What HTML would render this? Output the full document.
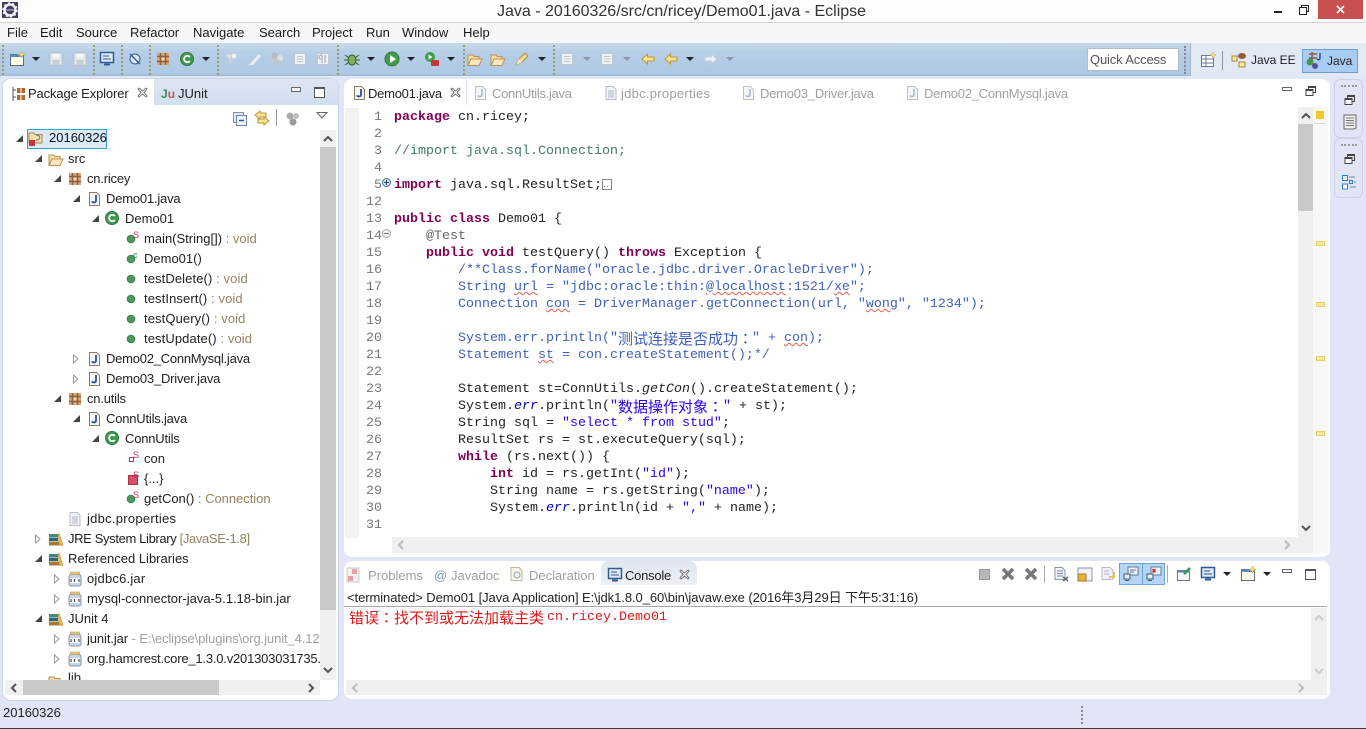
<!DOCTYPE html>
<html lang="en"><head><meta charset="utf-8"><title>Java - 20160326/src/cn/ricey/Demo01.java - Eclipse</title>
<style>
html,body{margin:0;padding:0}
body{width:1366px;height:729px;overflow:hidden;position:relative;background:#e1e5f6;font-family:"Liberation Sans","Noto Sans CJK SC",sans-serif;font-size:13px;color:#222}
div,span.p,svg.i,svg.co{position:absolute}
.t{white-space:nowrap;line-height:20px;height:20px}
.r{margin-top:1px}
.i{width:16px;height:16px;overflow:visible}
.m{top:23px;line-height:20px;font-size:13px;color:#1a1a1a}
.d{color:#95825f}
.g{color:#a0a0a0}
.a{width:0;height:0;border-left:4px solid transparent;border-right:4px solid transparent;border-top:4px solid #222;top:57px}
.al{border-top-color:#8a97a8}
.sep{width:1px;height:30px;top:45px;border-left:2px dotted #9a9a78}
.ex{width:0;height:0;border-style:solid;border-width:0 0 7px 7px;border-color:transparent transparent #444 transparent}
.co{width:6px;height:10px}
.ln{left:352px;width:30px;text-align:right;font:13.33px/17px "Liberation Mono",monospace;color:#787878;height:17px;margin-top:1px}
.c{left:394px;font:13.33px/17px "Liberation Mono","Noto Sans CJK SC",monospace;white-space:pre;color:#222;height:17px;margin-top:1px}
.c b{color:#7f0055;font-weight:bold}
.c .s{color:#2a00ff}
.c .f{color:#0000c0}
.c .cm{color:#3f7f5f}
.c .an{color:#646464}
.z{font:15px/17px "Noto Sans CJK SC",sans-serif;white-space:pre;height:17px;margin-top:1px}
.z span{font-family:"Noto Sans CJK TC",sans-serif}
.c u{text-decoration:underline wavy #e86050 1px;text-underline-offset:1px}
.mark{left:1316px;width:7px;height:3px;background:#fbe99b;border:1px solid #e8cf70}
</style></head>
<body>
<svg width="0" height="0" style="position:absolute">
<defs>
<symbol id="jf" viewBox="0 0 16 16"><path d="M3.500 1.500h7l3 3v10h-10z" fill="#f4f7fc" stroke="#8a7a58"/><path d="M10 4v5.500c0 2.500-3.500 2.500-4 .8" fill="none" stroke="#2c4f9c" stroke-width="1.800"/></symbol>
<symbol id="jg" viewBox="0 0 16 16"><path d="M3.500 1.500h7l3 3v10h-10z" fill="#f4f6fa" stroke="#c4c4ae"/><path d="M10 4v5.500c0 2.500-3.500 2.500-4 .8" fill="none" stroke="#a8b6d4" stroke-width="1.500"/></symbol>
<symbol id="pf" viewBox="0 0 16 16"><path d="M3 1.500h7l3 3v10H3z" fill="#f2f4f8" stroke="#b8bcc8"/><path d="M5 6h6M5 8h6M5 10h6M5 12h6" stroke="#b0b8c8"/></symbol>
<symbol id="pk" viewBox="0 0 16 16"><rect x="2" y="2" width="12" height="12" fill="#d8a878"/><path d="M2 5.500h12M2 10.500h12M5.500 2v12M10.500 2v12" stroke="#8f5d3c" stroke-width="1.500"/><rect x="6.500" y="6.500" width="3" height="3" fill="#f0d8b8"/></symbol>
<symbol id="cl" viewBox="0 0 16 16"><circle cx="8" cy="8" r="6.500" fill="#3f9a4e" stroke="#2f7a3c"/><path d="M10.800 6a3.200 3.200 0 1 0 0 4" fill="none" stroke="#fff" stroke-width="1.800"/></symbol>
<symbol id="mt" viewBox="0 0 16 16"><circle cx="8" cy="8" r="3.800" fill="#4e9a5e" stroke="#3a7f48"/></symbol>
<symbol id="jr" viewBox="0 0 16 16"><rect x="2" y="3.500" width="12" height="11.500" rx="2" fill="#c8d4e8" stroke="#8a96ac"/><rect x="3.500" y="1" width="9" height="2.500" fill="#e8c880" stroke="#b89858" stroke-width=".6"/><rect x="3" y="7" width="10" height="5" fill="#fff"/><path d="M4 8v3M7.500 8v3M12 8v3" stroke="#445" stroke-width="1.200"/></symbol>
<symbol id="lb" viewBox="0 0 16 16"><rect x="1" y="3" width="9" height="3" fill="#3e8a80"/><rect x="1" y="6.500" width="9" height="3.500" fill="#2c6a70"/><rect x="1" y="10.500" width="10" height="4" fill="#a87838"/><path d="M10 3l1-1 4 12.500h-3.500z" fill="#e8b850" stroke="#b88830" stroke-width=".5"/></symbol>
<symbol id="fo" viewBox="0 0 16 16"><path d="M1 4h5l1 1.500h5V8H4l-3 6.500z" fill="#f8dca0" stroke="#b8925a"/><path d="M1 14.500 4 8h11l-3 6.500z" fill="#fbe9bd" stroke="#b8925a"/></symbol>
<symbol id="win" viewBox="0 0 16 16"><rect x="1.500" y="3.500" width="13" height="11" fill="#fdfce8" stroke="#5a6a80"/><rect x="1.500" y="3.500" width="13" height="2.500" fill="#5c8ac0"/><path d="M12.500 0l1 2.500 2.500 1-2.500 1-1 2.500-1-2.500-2.500-1 2.500-1z" fill="#fbe27a" stroke="#c8a030" stroke-width=".5"/></symbol>
<symbol id="mon" viewBox="0 0 16 16"><rect x="1.500" y="1.500" width="13" height="10" fill="#dfe8f4" stroke="#2f5c94" stroke-width="1.500"/><path d="M4 5h6M4 8h8" stroke="#2f5c94"/><rect x="5" y="12.500" width="6" height="2" fill="#2f5c94"/></symbol>
<symbol id="run" viewBox="0 0 16 16"><circle cx="8" cy="8" r="7" fill="#3f9f48" stroke="#2f7a3c"/><path d="M6 4l6 4-6 4z" fill="#fff"/></symbol>
<symbol id="xg" viewBox="0 0 16 16"><path d="M3 3l10 10M13 3L3 13" stroke="#777" stroke-width="3.500"/></symbol>
<symbol id="back" viewBox="0 0 16 16"><path d="M7.500 3 2 8l5.500 5v-3H14V6H7.500z" fill="#fcdf8a" stroke="#c09838"/></symbol>
<symbol id="fwd" viewBox="0 0 16 16"><path d="M8.500 3 14 8l-5.500 5v-3H2V6h6.500z" fill="#eef0f4" stroke="#c8ccd4"/></symbol>
<symbol id="gd" viewBox="0 0 16 16"><rect x="2.500" y="2.500" width="11" height="11" fill="#eef1f5" stroke="#c2c7cf"/><path d="M5 5.500h6M5 8h6M5 10.500h6" stroke="#c0c5cd"/></symbol>
<symbol id="sv" viewBox="0 0 16 16"><rect x="2" y="2" width="12" height="12" fill="#e4e8ec" stroke="#bcc2ca"/><rect x="5" y="2.500" width="6" height="4" fill="#f6f8fa"/><rect x="5" y="9" width="6" height="5" fill="#c8ced6"/></symbol>
<symbol id="rs" viewBox="0 0 12 12"><rect x="3.500" y=".5" width="7" height="6" fill="none" stroke="#444"/><rect x="1" y="3.500" width="7" height="6" fill="#fff" stroke="#444"/><path d="M1 4.500h7M3.500 1.500h7" stroke="#444"/></symbol>
<symbol id="cx" viewBox="0 0 6 10"><path d="M.5 1l4.500 4-4.500 4z" fill="#fff" stroke="#9a9a9a"/></symbol>
</defs>
</svg>

<!-- title bar -->
<div style="left:0;top:0;width:1366px;height:22px;background:#fdfdfd;border-bottom:1px solid #d4d4d4"></div>
<svg class="i" style="left:2px;top:2px" viewBox="0 0 16 16"><rect width="16" height="16" fill="#3e3e62"/><circle cx="8" cy="8" r="5.500" fill="#3e3e62" stroke="#f0f0f6" stroke-width="2.500"/><circle cx="8" cy="8" r="7" fill="none" stroke="#f0f0f6" stroke-width="1.500" stroke-dasharray="2 2.400"/><rect x="4" y="7.500" width="8" height="1" fill="#ccd"/></svg>
<div class="t" style="left:497px;top:2px;font-size:16px;color:#333">Java - 20160326/src/cn/ricey/Demo01.java - Eclipse</div>
<div style="left:1274px;top:11px;width:8px;height:2px;background:#222"></div>
<svg style="left:1299px;top:5px;position:absolute" width="10" height="10" viewBox="0 0 10 10"><rect x="2.500" y=".5" width="7" height="6" fill="none" stroke="#222"/><rect x=".5" y="2.500" width="7" height="7" fill="#fff" stroke="#222"/></svg>
<div style="left:1318px;top:0;width:45px;height:19px;background:#c75050"></div>
<svg style="left:1336px;top:5px;position:absolute" width="9" height="9" viewBox="0 0 9 9"><path d="M1 1l7 7M8 1 1 8" stroke="#fff" stroke-width="1.600"/></svg>

<!-- menu -->
<div style="left:0;top:23px;width:1366px;height:20px;background:#f5f7f8"></div>
<div class="m" style="left:7px">File</div><div class="m" style="left:40px">Edit</div><div class="m" style="left:76px">Source</div><div class="m" style="left:130px">Refactor</div><div class="m" style="left:193px">Navigate</div><div class="m" style="left:259px">Search</div><div class="m" style="left:312px">Project</div><div class="m" style="left:366px">Run</div><div class="m" style="left:402px">Window</div><div class="m" style="left:463px">Help</div>

<!-- toolbar -->
<div style="left:0;top:43px;width:1190px;height:33px;background:linear-gradient(#c8dbec,#b6cee6 30%,#aec9e3 92%,#9db8d6)"></div>
<div style="left:0;top:76px;width:1366px;height:3px;background:#e1e8f5"></div>
<div class="sep" style="left:2px"></div><div class="sep" style="left:93px"></div><div class="sep" style="left:121px"></div><div class="sep" style="left:149px"></div><div class="sep" style="left:217px"></div><div class="sep" style="left:337px"></div><div class="sep" style="left:463px"></div><div class="sep" style="left:553px"></div>
<svg class="i" style="left:9px;top:51px"><use href="#win"/></svg><div class="a" style="left:32px"></div>
<svg class="i" style="left:48px;top:51px"><use href="#sv"/></svg>
<svg class="i" style="left:72px;top:51px"><use href="#sv"/></svg>
<svg class="i" style="left:99px;top:51px"><use href="#mon"/></svg>
<svg class="i" style="left:127px;top:51px" viewBox="0 0 16 16"><ellipse cx="8" cy="8" rx="5" ry="5" fill="#dfe8f4" stroke="#2f5c94"/><path d="M3 3l10 10" stroke="#2f5c94" stroke-width="1.300"/></svg>
<svg class="i" style="left:155px;top:51px"><use href="#pk"/></svg>
<svg class="i" style="left:179px;top:51px"><use href="#cl"/></svg><div class="a" style="left:202px"></div>
<svg class="i" style="left:223px;top:51px" viewBox="0 0 16 16"><path d="M2 3h9l-3 5v6l-2-2V8z" fill="#dde2e8" stroke="#c2c7cf"/><circle cx="11" cy="5" r="3" fill="#eef1f5" stroke="#c2c7cf"/></svg>
<svg class="i" style="left:247px;top:51px" viewBox="0 0 16 16"><path d="M2 14 12 3l2 2-8 9z" fill="#e8edf2"/></svg>
<svg class="i" style="left:269px;top:51px" viewBox="0 0 16 16"><circle cx="6" cy="5" r="3.500" fill="#b8bcc2"/><circle cx="11" cy="7" r="3" fill="#dde0e5"/><circle cx="7" cy="11" r="3.500" fill="#c2c6cc"/></svg>
<svg class="i" style="left:292px;top:51px"><use href="#gd"/></svg>
<svg class="i" style="left:315px;top:51px" viewBox="0 0 16 16"><rect x="2.500" y="2.500" width="11" height="11" fill="#eef1f5" stroke="#c2c7cf"/><path d="M7 4v8M10 4v8M7 4H6a2 2 0 0 0 0 4h1" fill="none" stroke="#b0b5bd" stroke-width="1.300"/></svg>
<svg class="i" style="left:344px;top:51px" viewBox="0 0 16 16"><ellipse cx="8" cy="9" rx="4" ry="5" fill="#7fb060" stroke="#405a30"/><path d="M1 4l4 3M15 4l-4 3M0 9h4M16 9h-4M1 14l4-3M15 14l-4-3" stroke="#405a30"/></svg><div class="a" style="left:367px"></div>
<svg class="i" style="left:384px;top:51px"><use href="#run"/></svg><div class="a" style="left:407px"></div>
<svg class="i" style="left:424px;top:51px" viewBox="0 0 16 16"><circle cx="6" cy="6" r="5" fill="#3f9f48"/><path d="M4.500 3.500l4 2.500-4 2.500z" fill="#fff"/><rect x="7" y="9" width="8" height="6" rx="1" fill="#c83838"/></svg><div class="a" style="left:447px"></div>
<svg class="i" style="left:467px;top:51px"><use href="#fo"/></svg>
<svg class="i" style="left:490px;top:51px"><use href="#fo"/></svg>
<svg class="i" style="left:514px;top:51px" viewBox="0 0 16 16"><path d="M2 14 5 8l6-6 3 3-6 6z" fill="#f0d890" stroke="#b09040"/><path d="M2 14l3-6 3 3z" fill="#eee"/></svg><div class="a" style="left:538px"></div>
<svg class="i" style="left:559px;top:51px"><use href="#gd"/></svg><div class="a al" style="left:583px"></div>
<svg class="i" style="left:599px;top:51px"><use href="#gd"/></svg><div class="a al" style="left:623px"></div>
<svg class="i" style="left:640px;top:51px"><use href="#back"/></svg>
<svg class="i" style="left:663px;top:51px"><use href="#back"/></svg><div class="a" style="left:686px"></div>
<svg class="i" style="left:703px;top:51px"><use href="#fwd"/></svg><div class="a al" style="left:726px"></div>

<!-- quick access / perspectives -->
<div class="t" style="left:1087px;top:48px;width:88px;height:21px;background:#fff;border:1px solid #b4bcc8;padding-left:2px;line-height:21px;color:#555;letter-spacing:-.15px">Quick Access</div>
<div style="left:1184px;top:46px;width:2px;height:28px;border-left:2px dotted #888"></div>
<div style="left:1190px;top:43px;width:176px;height:33px;background:#e3e8f5;border-left:1px solid #a8b4c8"></div>
<svg class="i" style="left:1200px;top:52px" viewBox="0 0 16 16"><rect x="1.500" y="3.500" width="12" height="11" fill="#fff" stroke="#6a7a90"/><path d="M1.500 7h12M1.500 11h12M6 3.500v11" stroke="#6a7a90"/><path d="M13 0l1 2 2 1-2 1-1 2-1-2-2-1 2-1z" fill="#fbe27a" stroke="#c8a030" stroke-width=".5"/></svg>
<div style="left:1222px;top:51px;width:1px;height:19px;background:#8a94a4"></div>
<svg class="i" style="left:1231px;top:52px" viewBox="0 0 16 16"><rect x="1" y="4" width="5" height="5" fill="#fbe9a0" stroke="#a88a30"/><rect x="8" y="10" width="6" height="5" fill="#fbe9a0" stroke="#a88a30"/><ellipse cx="11" cy="4" rx="4" ry="3" fill="#8f5d3c"/></svg>
<div class="t" style="left:1251px;top:50px;color:#222;font-size:12px">Java EE</div>
<div style="left:1302px;top:49px;width:54px;height:22px;background:#a9cdf2;border:1px solid #6a9fd0"></div>
<svg class="i" style="left:1306px;top:52px" viewBox="0 0 16 16"><path d="M3 2h8M3 6h8M6 0v9" stroke="#8f5d3c" stroke-width="1.500"/><circle cx="4" cy="10" r="3.500" fill="#3f9a4e"/><circle cx="9" cy="14" r="3" fill="#5a4a9a"/><path d="M14 1v5c0 2-2 2-3 1" fill="none" stroke="#2c4f9c" stroke-width="1.500"/></svg>
<div class="t" style="left:1327px;top:51px;color:#222;font-size:12px">Java</div>

<!-- left panel -->
<div style="left:3px;top:79px;width:335px;height:621px;background:#fff;border-radius:8px;box-shadow:0 0 0 1px #cfd6e6"></div>
<div style="left:154px;top:79px;width:184px;height:26px;background:linear-gradient(#dde5f3,#d2dfef);border-radius:0 8px 0 0"></div>
<div style="left:3px;top:79px;width:151px;height:26px;background:#fff;border-radius:8px 8px 0 0"></div>
<svg class="i" style="left:11px;top:86px" viewBox="0 0 16 16"><path d="M2 1v14M2 4h3M2 11h3" stroke="#555"/><rect x="6" y="2" width="8" height="5" fill="#b06a30"/><rect x="6" y="9" width="8" height="5" fill="#b06a30"/><path d="M10 2v12" stroke="#fff"/></svg>
<div class="t" style="left:28px;top:84px;color:#222;letter-spacing:-.13px">Package Explorer</div>
<svg style="left:137px;top:87px;position:absolute" width="11" height="11" viewBox="0 0 11 11"><path d="M2 1l3.500 3L9 1l1 1-3 3.500 3 3.500-1 1-3.500-3L2 10 1 9l3-3.500L1 2z" fill="#fff" stroke="#777"/></svg>
<div class="t" style="left:161px;top:84px;font-weight:bold;font-size:12px"><span style="color:#3b8a4e">J</span><span style="color:#c85060">u</span></div>
<div class="t" style="left:178px;top:84px;color:#222">JUnit</div>
<div style="left:291px;top:87px;width:8px;height:3px;border:1px solid #666;background:#fff"></div>
<div style="left:314px;top:87px;width:9px;height:8px;border:1px solid #555;border-top-width:2px;background:#fff"></div>
<svg class="i" style="left:232px;top:111px" viewBox="0 0 16 16"><rect x="1.500" y="1.500" width="10" height="10" fill="#dfe8f4" stroke="#7a92ac"/><rect x="4.500" y="4.500" width="10" height="10" fill="#eef3f9" stroke="#6a84a4"/><path d="M7 9.500h5" stroke="#2f5c94" stroke-width="1.500"/></svg>
<svg class="i" style="left:254px;top:110px" viewBox="0 0 16 16"><path d="M6 1 1 5l5 4V7h6V3H6zM10 7l5 4-5 4v-2H4V9h6z" fill="#fce39a" stroke="#b8962f"/></svg>
<div style="left:276px;top:109px;width:1px;height:17px;background:#999"></div>
<svg class="i" style="left:285px;top:111px" viewBox="0 0 16 16"><circle cx="5" cy="5" r="3.500" fill="#aaa"/><circle cx="11" cy="5" r="3" fill="#c0c0c0"/><circle cx="8" cy="11" r="3.500" fill="#999"/></svg>
<svg style="left:316px;top:112px;position:absolute" width="12" height="7" viewBox="0 0 12 7"><path d="M1 .5h10L6 6z" fill="#fff" stroke="#666"/></svg>

<!-- tree -->
<div style="left:27px;top:129px;width:78px;height:18px;background:#d9ebf9;border:1px solid #3fa2c9"></div>
<div class="ex" style="left:16px;top:135px"></div>
<svg class="i" style="left:28px;top:130px" viewBox="0 0 16 16"><path d="M1 3h5l1 1.500h7V13H1z" fill="#f6dfa8" stroke="#a88a50"/><path d="M8 5c5 0 5 5 0 5" fill="none" stroke="#4a6fa8"/><rect x="1" y="10" width="6" height="6" fill="#c83838"/></svg>
<div class="t r" style="left:49px;top:127px;color:#111">20160326</div>
<div class="ex" style="left:35px;top:155px"></div>
<svg class="i" style="left:48px;top:151px"><use href="#fo"/></svg>
<div class="t r" style="left:68px;top:148px">src</div>
<div class="ex" style="left:54px;top:175px"></div>
<svg class="i" style="left:67px;top:171px"><use href="#pk"/></svg>
<div class="t r" style="left:87px;top:168px;letter-spacing:-.2px">cn.ricey</div>
<div class="ex" style="left:73px;top:195px"></div>
<svg class="i" style="left:86px;top:191px"><use href="#jf"/></svg>
<div class="t r" style="left:106px;top:188px;letter-spacing:-.2px">Demo01.java</div>
<div class="ex" style="left:92px;top:215px"></div>
<svg class="i" style="left:104px;top:210px"><use href="#cl"/></svg>
<div class="t r" style="left:125px;top:208px">Demo01</div>
<svg class="i" style="left:123px;top:231px"><use href="#mt"/></svg><div class="t" style="left:133px;top:225px;font-size:9px;color:#c0285a">S</div>
<div class="t r" style="left:144px;top:228px">main(String[]) <span class="d">: void</span></div>
<svg class="i" style="left:123px;top:251px"><use href="#mt"/></svg><div class="t" style="left:133px;top:245px;font-size:9px;color:#2f7a3c">c</div>
<div class="t r" style="left:144px;top:248px">Demo01()</div>
<svg class="i" style="left:123px;top:271px"><use href="#mt"/></svg>
<div class="t r" style="left:144px;top:268px;letter-spacing:.1px">testDelete() <span class="d">: void</span></div>
<svg class="i" style="left:123px;top:291px"><use href="#mt"/></svg>
<div class="t r" style="left:144px;top:288px;letter-spacing:.1px">testInsert() <span class="d">: void</span></div>
<svg class="i" style="left:123px;top:311px"><use href="#mt"/></svg>
<div class="t r" style="left:144px;top:308px;letter-spacing:.1px">testQuery() <span class="d">: void</span></div>
<svg class="i" style="left:123px;top:331px"><use href="#mt"/></svg>
<div class="t r" style="left:144px;top:328px;letter-spacing:.1px">testUpdate() <span class="d">: void</span></div>
<svg class="co" style="left:73px;top:354px"><use href="#cx"/></svg>
<svg class="i" style="left:86px;top:351px"><use href="#jf"/></svg>
<div class="t r" style="left:106px;top:348px;letter-spacing:-.24px">Demo02_ConnMysql.java</div>
<svg class="co" style="left:73px;top:374px"><use href="#cx"/></svg>
<svg class="i" style="left:86px;top:371px"><use href="#jf"/></svg>
<div class="t r" style="left:106px;top:368px;letter-spacing:-.2px">Demo03_Driver.java</div>
<div class="ex" style="left:54px;top:395px"></div>
<svg class="i" style="left:67px;top:391px"><use href="#pk"/></svg>
<div class="t r" style="left:87px;top:388px;letter-spacing:-.2px">cn.utils</div>
<div class="ex" style="left:73px;top:415px"></div>
<svg class="i" style="left:86px;top:411px"><use href="#jf"/></svg>
<div class="t r" style="left:106px;top:408px;letter-spacing:-.2px">ConnUtils.java</div>
<div class="ex" style="left:92px;top:435px"></div>
<svg class="i" style="left:104px;top:430px"><use href="#cl"/></svg>
<div class="t r" style="left:125px;top:428px;letter-spacing:-.2px">ConnUtils</div>
<div style="left:129px;top:457px;width:3px;height:3px;border:1px solid #c83050"></div><div class="t" style="left:133px;top:445px;font-size:9px;color:#c0285a">S</div>
<div class="t r" style="left:144px;top:448px">con</div>
<div style="left:128px;top:475px;width:8px;height:8px;background:#d85068;border:1px solid #a83048"></div><div class="t" style="left:133px;top:465px;font-size:9px;color:#c0285a">S</div>
<div class="t r" style="left:144px;top:468px">{...}</div>
<svg class="i" style="left:123px;top:491px"><use href="#mt"/></svg><div class="t" style="left:133px;top:485px;font-size:9px;color:#c0285a">S</div>
<div class="t r" style="left:144px;top:488px;letter-spacing:-.03px">getCon() <span class="d">: Connection</span></div>
<svg class="i" style="left:67px;top:511px"><use href="#pf"/></svg>
<div class="t r" style="left:87px;top:508px;letter-spacing:.27px">jdbc.properties</div>
<svg class="co" style="left:35px;top:534px"><use href="#cx"/></svg>
<svg class="i" style="left:48px;top:531px"><use href="#lb"/></svg>
<div class="t r" style="left:68px;top:528px;letter-spacing:-.36px">JRE System Library <span class="d">[JavaSE-1.8]</span></div>
<div class="ex" style="left:35px;top:555px"></div>
<svg class="i" style="left:48px;top:551px"><use href="#lb"/></svg>
<div class="t r" style="left:68px;top:548px">Referenced Libraries</div>
<svg class="co" style="left:54px;top:574px"><use href="#cx"/></svg>
<svg class="i" style="left:67px;top:571px"><use href="#jr"/></svg>
<div class="t r" style="left:87px;top:568px;letter-spacing:.2px">ojdbc6.jar</div>
<svg class="co" style="left:54px;top:594px"><use href="#cx"/></svg>
<svg class="i" style="left:67px;top:591px"><use href="#jr"/></svg>
<div class="t r" style="left:87px;top:588px">mysql-connector-java-5.1.18-bin.jar</div>
<div class="ex" style="left:35px;top:615px"></div>
<svg class="i" style="left:48px;top:611px"><use href="#lb"/></svg>
<div class="t r" style="left:68px;top:608px">JUnit 4</div>
<svg class="co" style="left:54px;top:634px"><use href="#cx"/></svg>
<svg class="i" style="left:67px;top:631px"><use href="#jr"/></svg>
<div class="t r" style="left:87px;top:628px;width:233px;overflow:hidden;letter-spacing:-.1px">junit.jar <span class="g">- E:\eclipse\plugins\org.junit_4.12.0</span></div>
<svg class="co" style="left:54px;top:654px"><use href="#cx"/></svg>
<svg class="i" style="left:67px;top:651px"><use href="#jr"/></svg>
<div class="t r" style="left:87px;top:648px;width:233px;overflow:hidden;letter-spacing:-.2px">org.hamcrest.core_1.3.0.v201303031735.jar</div>
<div style="left:3px;top:671px;width:317px;height:9px;overflow:hidden"><svg class="i" style="left:45px;top:2px"><use href="#fo"/></svg><div class="t" style="left:65px;top:-3px">lib</div></div>
<!-- left scrollbars -->
<div style="left:320px;top:130px;width:16px;height:550px;background:#f0f0f0"></div>
<div style="left:320px;top:147px;width:16px;height:463px;background:#c9c9c9"></div>
<svg style="left:323px;top:135px;position:absolute" width="10" height="7"><path d="M1 6l4-4 4 4" fill="none" stroke="#555" stroke-width="2"/></svg>
<svg style="left:323px;top:667px;position:absolute" width="10" height="7"><path d="M1 1l4 4 4-4" fill="none" stroke="#555" stroke-width="2"/></svg>
<div style="left:5px;top:680px;width:315px;height:15px;background:#f0f0f0"></div>
<div style="left:23px;top:680px;width:196px;height:15px;background:#c9c9c9"></div>
<svg style="left:10px;top:683px;position:absolute" width="7" height="10"><path d="M6 1 2 5l4 4" fill="none" stroke="#555" stroke-width="2"/></svg>
<svg style="left:308px;top:683px;position:absolute" width="7" height="10"><path d="M1 1l4 4-4 4" fill="none" stroke="#555" stroke-width="2"/></svg>

<!-- editor -->
<div style="left:344px;top:79px;width:986px;height:478px;background:#fff;border-radius:8px"></div>
<svg class="i" style="left:351px;top:85px"><use href="#jf"/></svg>
<div class="t" style="left:368px;top:84px;color:#222;letter-spacing:-.25px">Demo01.java</div>
<svg style="left:450px;top:87px;position:absolute" width="11" height="11" viewBox="0 0 11 11"><path d="M2 1l3.500 3L9 1l1 1-3 3.500 3 3.500-1 1-3.500-3L2 10 1 9l3-3.500L1 2z" fill="#fff" stroke="#777"/></svg>
<div style="left:466px;top:79px;width:1px;height:26px;background:#e4e8f0"></div>
<svg class="i" style="left:472px;top:85px"><use href="#jg"/></svg>
<div class="t g" style="left:492px;top:84px;letter-spacing:-.3px">ConnUtils.java</div>
<svg class="i" style="left:603px;top:85px"><use href="#pf"/></svg>
<div class="t g" style="left:621px;top:84px;letter-spacing:.27px">jdbc.properties</div>
<svg class="i" style="left:740px;top:85px"><use href="#jg"/></svg>
<div class="t g" style="left:760px;top:84px;letter-spacing:-.22px">Demo03_Driver.java</div>
<svg class="i" style="left:904px;top:85px"><use href="#jg"/></svg>
<div class="t g" style="left:924px;top:84px;letter-spacing:-.24px">Demo02_ConnMysql.java</div>
<div style="left:1282px;top:87px;width:8px;height:2px;border:1px solid #666"></div>
<svg style="left:1305px;top:86px;position:absolute" width="12" height="12" viewBox="0 0 12 12"><use href="#rs"/></svg>
<div style="left:345px;top:108px;width:14px;height:430px;background:#f3f3f3"></div>

<!-- line numbers -->
<div class="ln" style="top:108px">1</div><div class="ln" style="top:125px">2</div><div class="ln" style="top:142px">3</div><div class="ln" style="top:159px">4</div><div class="ln" style="top:176px">5</div><div class="ln" style="top:193px">12</div><div class="ln" style="top:210px">13</div><div class="ln" style="top:227px">14</div><div class="ln" style="top:244px">15</div><div class="ln" style="top:261px">16</div><div class="ln" style="top:278px">17</div><div class="ln" style="top:295px">18</div><div class="ln" style="top:312px">19</div><div class="ln" style="top:329px">20</div><div class="ln" style="top:346px">21</div><div class="ln" style="top:363px">22</div><div class="ln" style="top:380px">23</div><div class="ln" style="top:397px">24</div><div class="ln" style="top:414px">25</div><div class="ln" style="top:431px">26</div><div class="ln" style="top:448px">27</div><div class="ln" style="top:465px">28</div><div class="ln" style="top:482px">29</div><div class="ln" style="top:499px">30</div><div class="ln" style="top:516px">31</div>
<svg style="left:382px;top:178px;position:absolute" width="9" height="9" viewBox="0 0 9 9"><circle cx="4.500" cy="4.500" r="4" fill="#d8e4f4" stroke="#4a6a94"/><path d="M2 4.500h5M4.500 2v5" stroke="#26466e"/></svg>
<svg style="left:382px;top:229px;position:absolute" width="9" height="9" viewBox="0 0 9 9"><circle cx="4.500" cy="4.500" r="4" fill="#eee" stroke="#aaa"/><path d="M2 4.500h5" stroke="#777"/></svg>

<!-- code -->
<div class="c" style="top:108px"><b>package</b> cn.ricey;</div>
<div class="c" style="top:142px"><span class="cm">//import java.sql.Connection;</span></div>
<div class="c" style="top:176px"><b>import</b> java.sql.ResultSet;</div>
<div style="left:602px;top:179px;width:8px;height:9px;border:1px solid #888"></div>
<div style="left:604px;top:186px;width:1px;height:1px;background:#777"></div><div style="left:607px;top:186px;width:1px;height:1px;background:#777"></div>
<div class="c" style="top:210px"><b>public class</b> Demo01 {</div>
<div class="c" style="top:227px">    <span class="an">@Test</span></div>
<div class="c" style="top:244px">    <b>public void</b> testQuery() <b>throws</b> Exception {</div>
<div class="c" style="top:261px;color:#3f5fbf">        /**Class.forName("oracle.jdbc.driver.OracleDriver");</div>
<div class="c" style="top:278px;color:#3f5fbf">        String <u>url</u> = "jdbc:oracle:thin:<u>@localhost</u>:1521/<u>xe</u>";</div>
<div class="c" style="top:295px;color:#3f5fbf">        Connection <u>con</u> = DriverManager.getConnection(url, "<u>wong</u>", "1234");</div>
<div class="c" style="top:329px;color:#3f5fbf">        System.err.println("</div>
<div class="z" style="left:618px;top:329px;color:#3f5fbf">测试连接是否成功<span>：</span></div>
<div class="c" style="left:752px;top:329px;color:#3f5fbf">" + <u>con</u>);</div>
<div class="c" style="top:346px;color:#3f5fbf">        Statement <u>st</u> = con.createStatement();*/</div>
<div class="c" style="top:380px">        Statement st=ConnUtils.<i>getCon</i>().createStatement();</div>
<div class="c" style="top:397px">        System.<span class="f"><i>err</i></span>.println(<span class="s">"</span></div>
<div class="z" style="left:618px;top:397px;color:#2a00ff">数据操作对象<span>：</span></div>
<div class="c" style="left:723px;top:397px"><span class="s">" </span>+ st);</div>
<div class="c" style="top:414px">        String sql = <span class="s">"select * from stud"</span>;</div>
<div class="c" style="top:431px">        ResultSet rs = st.executeQuery(sql);</div>
<div class="c" style="top:448px">        <b>while</b> (rs.next()) {</div>
<div class="c" style="top:465px">            <b>int</b> id = rs.getInt(<span class="s">"id"</span>);</div>
<div class="c" style="top:482px">            String name = rs.getString(<span class="s">"name"</span>);</div>
<div class="c" style="top:499px">            System.<span class="f"><i>err</i></span>.println(id + <span class="s">","</span> + name);</div>

<!-- editor scrollbars -->
<div style="left:1298px;top:107px;width:15px;height:430px;background:#f0f0f0"></div>
<div style="left:1298px;top:124px;width:15px;height:87px;background:#c9c9c9"></div>
<svg style="left:1301px;top:112px;position:absolute" width="10" height="7"><path d="M1 6l4-4 4 4" fill="none" stroke="#555" stroke-width="2"/></svg>
<svg style="left:1301px;top:525px;position:absolute" width="10" height="7"><path d="M1 1l4 4 4-4" fill="none" stroke="#555" stroke-width="2"/></svg>
<div style="left:1313px;top:107px;width:15px;height:446px;background:#f8f8f8"></div>
<div style="left:1316px;top:111px;width:8px;height:8px;background:#f5c72c;border:0"></div>
<div style="left:1314px;top:123px;width:12px;height:1px;background:#d8d8d8"></div>
<div class="mark" style="top:241px"></div><div class="mark" style="top:302px"></div><div class="mark" style="top:356px"></div><div class="mark" style="top:431px"></div>
<div style="left:392px;top:537px;width:921px;height:16px;background:#f0f0f0"></div>
<svg style="left:397px;top:540px;position:absolute" width="7" height="10"><path d="M6 1 2 5l4 4" fill="none" stroke="#bbb" stroke-width="2"/></svg>
<svg style="left:1284px;top:540px;position:absolute" width="7" height="10"><path d="M1 1l4 4-4 4" fill="none" stroke="#bbb" stroke-width="2"/></svg>

<!-- right trim -->
<div style="left:1334px;top:79px;width:27px;height:57px;background:#e1e5f6;border:1px solid #cdd3e2;border-radius:6px"></div>
<div style="left:1334px;top:138px;width:27px;height:58px;background:#e1e5f6;border:1px solid #cdd3e2;border-radius:6px"></div>
<div style="left:1341px;top:85px;width:16px;height:2px;border-top:2px dotted #999"></div>
<div style="left:1341px;top:144px;width:16px;height:2px;border-top:2px dotted #999"></div>
<svg style="left:1344px;top:95px;position:absolute" width="12" height="12" viewBox="0 0 12 12"><use href="#rs"/></svg>
<svg style="left:1344px;top:154px;position:absolute" width="12" height="12" viewBox="0 0 12 12"><use href="#rs"/></svg>
<svg class="i" style="left:1342px;top:114px" viewBox="0 0 16 16"><path d="M2 1h12v13l-2 1H2z" fill="#eef0f2" stroke="#666"/><path d="M4 4h8M4 6.500h8M4 9h8M4 11.500h8" stroke="#777"/></svg>
<svg class="i" style="left:1341px;top:174px" viewBox="0 0 16 16"><rect x="1.500" y="1.500" width="5" height="5" fill="#fff" stroke="#2f7fc8"/><rect x="1.500" y="10" width="5" height="5" fill="#fff" stroke="#2f7fc8"/><rect x="8.500" y="6.500" width="3" height="3" fill="none" stroke="#2f7fc8"/><path d="M8 3h6M13 8h2M9 13h6" stroke="#6a8aa8"/></svg>

<!-- console -->
<div style="left:344px;top:561px;width:986px;height:138px;background:#fff;border-radius:8px"></div>
<div style="left:601px;top:561px;width:96px;height:24px;background:linear-gradient(#dfe5f0,#eef1f6);border-radius:8px 8px 0 0"></div>
<svg class="i" style="left:346px;top:567px" viewBox="0 0 16 16"><rect x="1" y="1" width="12" height="14" fill="#f0f0f0" stroke="#ccc"/><rect x="6" y="2" width="5" height="5" fill="#e8a0a8"/><rect x="2" y="9" width="5" height="5" fill="#e8a0a8"/></svg>
<div class="t g" style="left:368px;top:566px">Problems</div>
<div class="t" style="left:434px;top:566px;color:#7a94b8">@</div>
<div class="t g" style="left:451px;top:566px">Javadoc</div>
<svg class="i" style="left:509px;top:566px" viewBox="0 0 16 16"><path d="M2 1.500h8l3 3v10H2z" fill="#f8f6e8" stroke="#c0b890"/><circle cx="8" cy="9" r="3" fill="none" stroke="#8aa0c0"/></svg>
<div class="t g" style="left:529px;top:566px">Declaration</div>
<svg class="i" style="left:607px;top:567px"><use href="#mon"/></svg>
<div class="t" style="left:625px;top:566px;color:#222;letter-spacing:-.25px">Console</div>
<svg style="left:679px;top:569px;position:absolute" width="11" height="11" viewBox="0 0 11 11"><path d="M2 1l3.500 3L9 1l1 1-3 3.500 3 3.500-1 1-3.500-3L2 10 1 9l3-3.500L1 2z" fill="#fff" stroke="#777"/></svg>

<div style="left:979px;top:569px;width:9px;height:9px;background:#b8b8b8;border:1px solid #999"></div>
<svg class="i" style="left:1000px;top:566px"><use href="#xg"/></svg>
<svg class="i" style="left:1023px;top:566px"><use href="#xg"/></svg>
<div style="left:1044px;top:565px;width:1px;height:18px;background:#aaa"></div>
<svg class="i" style="left:1053px;top:566px" viewBox="0 0 16 16"><path d="M2 1.500h7l3 3v9H2z" fill="#f2f4fa" stroke="#8a94a8"/><path d="M4 5h6M4 7.500h6M4 10h6" stroke="#7088b8"/><path d="M10 11l5 4M15 11l-5 4" stroke="#666" stroke-width="1.500"/></svg>
<svg class="i" style="left:1077px;top:566px" viewBox="0 0 16 16"><rect x="1" y="2" width="14" height="13" fill="#f0f2f6" stroke="#8a94a8"/><rect x="1" y="8" width="8" height="7" rx="1" fill="#e8b040" stroke="#a87820"/></svg>
<svg class="i" style="left:1100px;top:566px" viewBox="0 0 16 16"><path d="M2 1.500h8l3 3v9H2z" fill="#f2f0fa" stroke="#b8b8c8"/><path d="M4 5h5M4 8h5" stroke="#b0a8d0"/><path d="M14 6v5H9" fill="none" stroke="#e0c060" stroke-width="2"/></svg>
<div style="left:1119px;top:563px;width:22px;height:20px;background:#b5d5f7;border:1px solid #6ba5dc"></div>
<div style="left:1142px;top:563px;width:21px;height:20px;background:#b5d5f7;border:1px solid #6ba5dc"></div>
<svg class="i" style="left:1123px;top:566px" viewBox="0 0 16 16"><rect x="5" y="1" width="10" height="8" fill="#f0f4fa" stroke="#5a7a9a"/><path d="M7 4h6M7 6h4" stroke="#5a7a9a"/><rect x="1" y="8" width="6" height="5" fill="#e4ecf4" stroke="#3a5a7a"/><path d="M2 14.500h4" stroke="#3a5a7a"/></svg>
<svg class="i" style="left:1146px;top:566px" viewBox="0 0 16 16"><rect x="5" y="1" width="10" height="8" fill="#f0f4fa" stroke="#5a7a9a"/><path d="M6.500 3l3 3.500M9.500 3l-3 3.500" stroke="#d02030" stroke-width="1.500"/><rect x="1" y="8" width="6" height="5" fill="#e4ecf4" stroke="#3a5a7a"/><path d="M2 14.500h4" stroke="#3a5a7a"/></svg>
<div style="left:1167px;top:565px;width:1px;height:18px;background:#aaa"></div>
<svg class="i" style="left:1176px;top:566px" viewBox="0 0 16 16"><rect x="1.500" y="4.500" width="12" height="10" fill="#f4f6fa" stroke="#6a7a90"/><rect x="1.500" y="4.500" width="12" height="2" fill="#5c8ac0"/><path d="M8 8l6-6" stroke="#2a9a48" stroke-width="2.500"/></svg>
<svg class="i" style="left:1200px;top:566px"><use href="#mon"/></svg>
<div class="a" style="left:1223px;top:572px"></div>
<svg class="i" style="left:1240px;top:566px"><use href="#win"/></svg>
<div class="a" style="left:1263px;top:572px"></div>
<div style="left:1282px;top:569px;width:8px;height:2px;border:1px solid #666"></div>
<div style="left:1305px;top:569px;width:9px;height:8px;border:1px solid #555;border-top-width:2px"></div>

<div class="t" style="left:347px;top:588px;color:#222;letter-spacing:-.07px">&lt;terminated&gt; Demo01 [Java Application] E:\jdk1.8.0_60\bin\javaw.exe (2016年3月29日 下午5:31:16)</div>
<div style="left:344px;top:606px;width:983px;height:1px;background:#a8a8a8"></div>
<div class="z" style="left:349px;top:608px;color:#e01818">错误<span>：</span>找不到或无法加载主类</div>
<div class="c" style="left:547px;top:608px;color:#e01818">cn.ricey.Demo01</div>
<div style="left:1311px;top:608px;width:16px;height:72px;background:#f0f0f0"></div>
<svg style="left:1314px;top:614px;position:absolute" width="10" height="7"><path d="M1 6l4-4 4 4" fill="none" stroke="#ccc" stroke-width="2"/></svg>
<svg style="left:1314px;top:668px;position:absolute" width="10" height="7"><path d="M1 1l4 4 4-4" fill="none" stroke="#ccc" stroke-width="2"/></svg>
<div style="left:346px;top:680px;width:981px;height:15px;background:#f0f0f0"></div>
<svg style="left:351px;top:683px;position:absolute" width="7" height="10"><path d="M6 1 2 5l4 4" fill="none" stroke="#bbb" stroke-width="2"/></svg>
<svg style="left:1298px;top:683px;position:absolute" width="7" height="10"><path d="M1 1l4 4-4 4" fill="none" stroke="#bbb" stroke-width="2"/></svg>

<!-- status -->
<div class="t" style="left:3px;top:703px;color:#222">20160326</div>
<div style="left:1081px;top:706px;width:2px;height:18px;border-left:2px dotted #888"></div>
<div style="left:0;top:728px;width:1366px;height:1px;background:#3a3a3a"></div>
</body></html>
